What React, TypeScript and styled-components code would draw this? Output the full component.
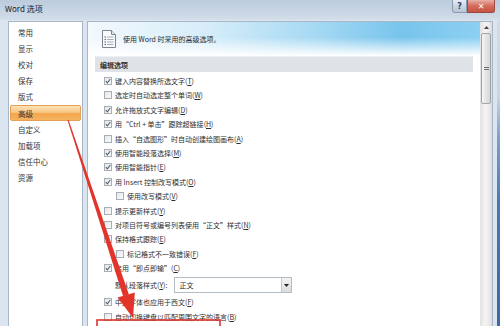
import React from "react";
import styled, { createGlobalStyle } from "styled-components";

const GlobalStyle = createGlobalStyle`
  html, body {
    margin: 0;
    padding: 0;
    width: 500px;
    height: 326px;
    overflow: hidden;
    background: #dbe5f1;
  }
  body {
    font-family: "Noto Sans CJK SC", "Noto Sans", sans-serif;
    color: #2e2e2e;
  }
`;

const Window = styled.div`
  position: relative;
  width: 500px;
  height: 326px;
  overflow: hidden;
  display: flex;
  flex-direction: column;
  background: #dbe5f0;
`;

const TitleBar = styled.div`
  height: 20px;
  flex: none;
  display: flex;
  align-items: flex-start;
  background: linear-gradient(to bottom, #bccbdd, #cbd7e5 70%, #d5dfeb);
`;

const Title = styled.span`
  font-size: 8px;
  line-height: 10px;
  padding: 4px 0 0 5px;
  color: #1b1b1b;
`;

const Controls = styled.div`
  margin-left: auto;
  margin-right: 5px;
  display: flex;
`;

const CtrlButton = styled.div<{ $close?: boolean }>`
  width: ${({ $close }) => ($close ? 28 : 15)}px;
  height: 13px;
  box-sizing: border-box;
  display: flex;
  align-items: center;
  justify-content: center;
  font-family: "DejaVu Sans", sans-serif;
  font-size: 8px;
  font-weight: 700;
  border: 1px solid ${({ $close }) => ($close ? "#9a4a42" : "#8b9cb0")};
  border-top: none;
  border-radius: ${({ $close }) => ($close ? "0 0 3px 0" : "0 0 0 3px")};
  color: ${({ $close }) => ($close ? "#fff" : "#2f3e52")};
  background: ${({ $close }) =>
    $close
      ? "linear-gradient(to bottom, #e6b0a4, #d46a5a 50%, #c65444)"
      : "linear-gradient(to bottom, #e7eef6, #c8d5e4 50%, #b8c8da)"};
`;

const Body = styled.div`
  flex: 1;
  min-height: 0;
  display: flex;
  gap: 4px;
  padding: 1px 0 0 8px;
`;

const Nav = styled.ul`
  width: 75px;
  flex: none;
  margin: 0;
  padding: 2px 1px;
  list-style: none;
  box-sizing: border-box;
  background: #fff;
  border: 1px solid #a9b6c6;
  border-bottom: none;
`;

const NavItem = styled.li<{ $active?: boolean }>`
  height: 16.2px;
  box-sizing: border-box;
  display: flex;
  align-items: center;
  padding-left: 8px;
  font-size: 7.5px;
  color: #333;
  border-radius: 2px;
  ${({ $active }) =>
    $active &&
    `background: linear-gradient(to bottom, #fbe2b4, #f8c784 45%, #f3a44c 55%, #f5b462);
    border: 1px solid #e3a054;
    padding-left: 7px;`}
`;

const Content = styled.div`
  width: 406px;
  flex: none;
  display: flex;
  box-sizing: border-box;
  background: #fff;
  border: 1px solid #a9b6c6;
  border-bottom: none;
`;

const Main = styled.div`
  flex: 1;
  min-width: 0;
  display: flex;
  flex-direction: column;
`;

const Header = styled.div`
  height: 34px;
  flex: none;
  display: flex;
  align-items: center;
  gap: 5px;
  padding-left: 12px;
  background-color: #d8eef9;
  background-image: linear-gradient(to bottom, rgba(255, 255, 255, 0) 45%, #ffffff 100%), linear-gradient(to right, #f3f9fd 0%, #d6edf9 30%, #a6d9f3 58%, #78c4ec 80%, #8cd0f2 100%);
`;

const HeaderText = styled.span`
  font-size: 7px;
  color: #2a2a2a;
`;

const SectionBar = styled.div`
  height: 16px;
  margin: 0 7px;
  display: flex;
  align-items: center;
  padding-left: 5px;
  font-size: 7px;
  font-weight: 700;
  color: #333;
  background: #dfe3e8;
  border-top: 1px solid #eef0f3;
  box-sizing: border-box;
`;

const Options = styled.div`
  display: flex;
  flex-direction: column;
  padding: 1.8px 0 0 16px;
`;

const Row = styled.label<{ $indent?: boolean }>`
  height: 14.4px;
  display: flex;
  align-items: center;
  gap: 3px;
  padding-left: ${({ $indent }) => ($indent ? 12 : 0)}px;
  font-size: 7px;
  color: #2e2e2e;
  white-space: nowrap;

  u {
    text-decoration-thickness: 0.5px;
    text-underline-offset: 1px;
  }
`;

const SelectRow = styled.div`
  height: 20px;
  display: flex;
  align-items: center;
  gap: 7px;
  padding-left: 11px;
  font-size: 7px;
  color: #2e2e2e;
  white-space: nowrap;
`;

const Box = styled.span`
  width: 8px;
  height: 8px;
  flex: none;
  box-sizing: border-box;
  display: flex;
  align-items: center;
  justify-content: center;
  border: 1px solid #a7aeb6;
  background: linear-gradient(135deg, #e4e7ea, #fbfbfb);
`;

const Select = styled.div`
  width: 118px;
  height: 16px;
  box-sizing: border-box;
  display: flex;
  align-items: center;
  border: 1px solid #b3bbc4;
  background: #fff;
  padding-left: 4px;
`;

const SelectButton = styled.span`
  margin-left: auto;
  width: 10px;
  height: 14px;
  box-sizing: border-box;
  display: flex;
  align-items: center;
  justify-content: center;
  border-left: 1px solid #c3c9d0;
  background: linear-gradient(to bottom, #f4f4f4, #dcdcdc);
`;

const Scrollbar = styled.div`
  width: 12px;
  flex: none;
  display: flex;
  flex-direction: column;
  background: linear-gradient(to right, #e2e2e2, #f4f4f4 45%, #e9e9e9 80%, #dadada);
`;

const ScrollArrow = styled.div`
  height: 11px;
  display: flex;
  align-items: center;
  justify-content: center;
`;

const Thumb = styled.div`
  height: 71px;
  margin: 0 1px;
  box-sizing: border-box;
  display: flex;
  align-items: center;
  justify-content: center;
  border: 1px solid #9ea4aa;
  border-radius: 2px;
  background: linear-gradient(to right, #f6f6f6, #e5e5e5 50%, #d6d6d6);
`;

const Grip = styled.span`
  width: 5px;
  height: 4px;
  background: repeating-linear-gradient(to bottom, #6b6f74 0 1px, transparent 1px 2px);
`;

const FrameEdge = styled.div`
  width: 7px;
  flex: none;
  background: linear-gradient(to bottom, #d2dbe6 0%, #c9d4e2 25%, #7f9fcb 38%, #4d76b0 60%, #3f67a3 100%);
`;

const Overlay = styled.svg`
  position: absolute;
  inset: 0;
  pointer-events: none;
`;

const navItems = ["常用", "显示", "校对", "保存", "版式", "高级", "自定义", "加载项", "信任中心", "资源"];

type Option = { label: string; key: string; checked: boolean; indent?: boolean };

const before: Option[] = [
  { label: "键入内容替换所选文字", key: "T", checked: true },
  { label: "选定时自动选定整个单词", key: "W", checked: false },
  { label: "允许拖放式文字编辑", key: "D", checked: true },
  { label: "用“Ctrl + 单击”跟踪超链接", key: "H", checked: true },
  { label: "插入“自选图形”时自动创建绘图画布", key: "A", checked: false },
  { label: "使用智能段落选择", key: "M", checked: true },
  { label: "使用智能指针", key: "E", checked: true },
  { label: "用 Insert 控制改写模式", key: "O", checked: true },
  { label: "使用改写模式", key: "V", checked: false, indent: true },
  { label: "提示更新样式", key: "Y", checked: false },
  { label: "对项目符号或编号列表使用“正文”样式", key: "N", checked: false },
  { label: "保持格式跟踪", key: "E", checked: false },
  { label: "标记格式不一致错误", key: "F", checked: false, indent: true },
  { label: "启用“即点即输”", key: "C", checked: true },
];

const after: Option[] = [
  { label: "中文字体也应用于西文", key: "F", checked: true },
  { label: "自动切换键盘以匹配周围文字的语言", key: "B", checked: false },
];

const Check: React.FC<{ on: boolean }> = ({ on }) => (
  <Box>
    {on && (
      <svg width="6" height="6" viewBox="0 0 6 6">
        <path d="M0.8 3.1 L2.4 4.8 L5.3 1" fill="none" stroke="#55606e" strokeWidth="1.1" />
      </svg>
    )}
  </Box>
);

const OptionRow: React.FC<{ o: Option }> = ({ o }) => (
  <Row $indent={o.indent}>
    <Check on={o.checked} />
    <span>
      {o.label}(<u>{o.key}</u>)
    </span>
  </Row>
);

const DocIcon = () => (
  <svg width="18" height="20" viewBox="0 0 18 20">
    <path d="M2.5 1.5 H11.5 L15.5 5.5 V18.5 H2.5 Z" fill="#fbfcfd" stroke="#7b8692" strokeWidth="1" />
    <path d="M11.5 1.5 V5.5 H15.5" fill="#e3e8ee" stroke="#7b8692" strokeWidth="1" />
    {[8, 10.5, 13, 15.5].map((y) => (
      <g key={y}>
        <rect x="4.5" y={y - 0.6} width="1.4" height="1.2" fill="#5d6a78" />
        <rect x="7" y={y - 0.4} width="6.5" height="0.8" fill="#8f9aa6" />
      </g>
    ))}
  </svg>
);

// arrow geometry: tapered shaft from the 高级 item down to the boxed option
const shaft = "67.5,120.2 68.5,119.8 128.9,294.4 123.1,296.2";
const head = "133,318 134.8,292.4 117.6,297.6";

const App: React.FC = () => (
  <>
    <GlobalStyle />
    <Window>
      <TitleBar>
        <Title>Word 选项</Title>
        <Controls>
          <CtrlButton>?</CtrlButton>
          <CtrlButton $close>✕</CtrlButton>
        </Controls>
      </TitleBar>
      <Body>
        <Nav>
          {navItems.map((n) => (
            <NavItem key={n} $active={n === "高级"}>
              {n}
            </NavItem>
          ))}
        </Nav>
        <Content>
          <Main>
            <Header>
              <DocIcon />
              <HeaderText>使用 Word 时采用的高级选项。</HeaderText>
            </Header>
            <SectionBar>编辑选项</SectionBar>
            <Options>
              {before.map((o, i) => (
                <OptionRow key={i} o={o} />
              ))}
              <SelectRow>
                <span>
                  默认段落样式(<u>Y</u>):
                </span>
                <Select>
                  正文
                  <SelectButton>
                    <svg width="5" height="3" viewBox="0 0 5 3">
                      <path d="M0 0 H5 L2.5 3 Z" fill="#222" />
                    </svg>
                  </SelectButton>
                </Select>
              </SelectRow>
              {after.map((o, i) => (
                <OptionRow key={i} o={o} />
              ))}
            </Options>
          </Main>
          <Scrollbar>
            <ScrollArrow>
              <svg width="5" height="3" viewBox="0 0 5 3">
                <path d="M0 3 H5 L2.5 0 Z" fill="#444" />
              </svg>
            </ScrollArrow>
            <Thumb>
              <Grip />
            </Thumb>
          </Scrollbar>
        </Content>
        <FrameEdge />
      </Body>
      <Overlay width="500" height="326" viewBox="0 0 500 326">
        <polygon points={shaft} fill="#e2342b" />
        <polygon points={head} fill="#e2342b" />
        <rect x="97" y="320" width="123" height="20" fill="none" stroke="#d9362e" strokeWidth="1.6" />
      </Overlay>
    </Window>
  </>
);

export default App;
